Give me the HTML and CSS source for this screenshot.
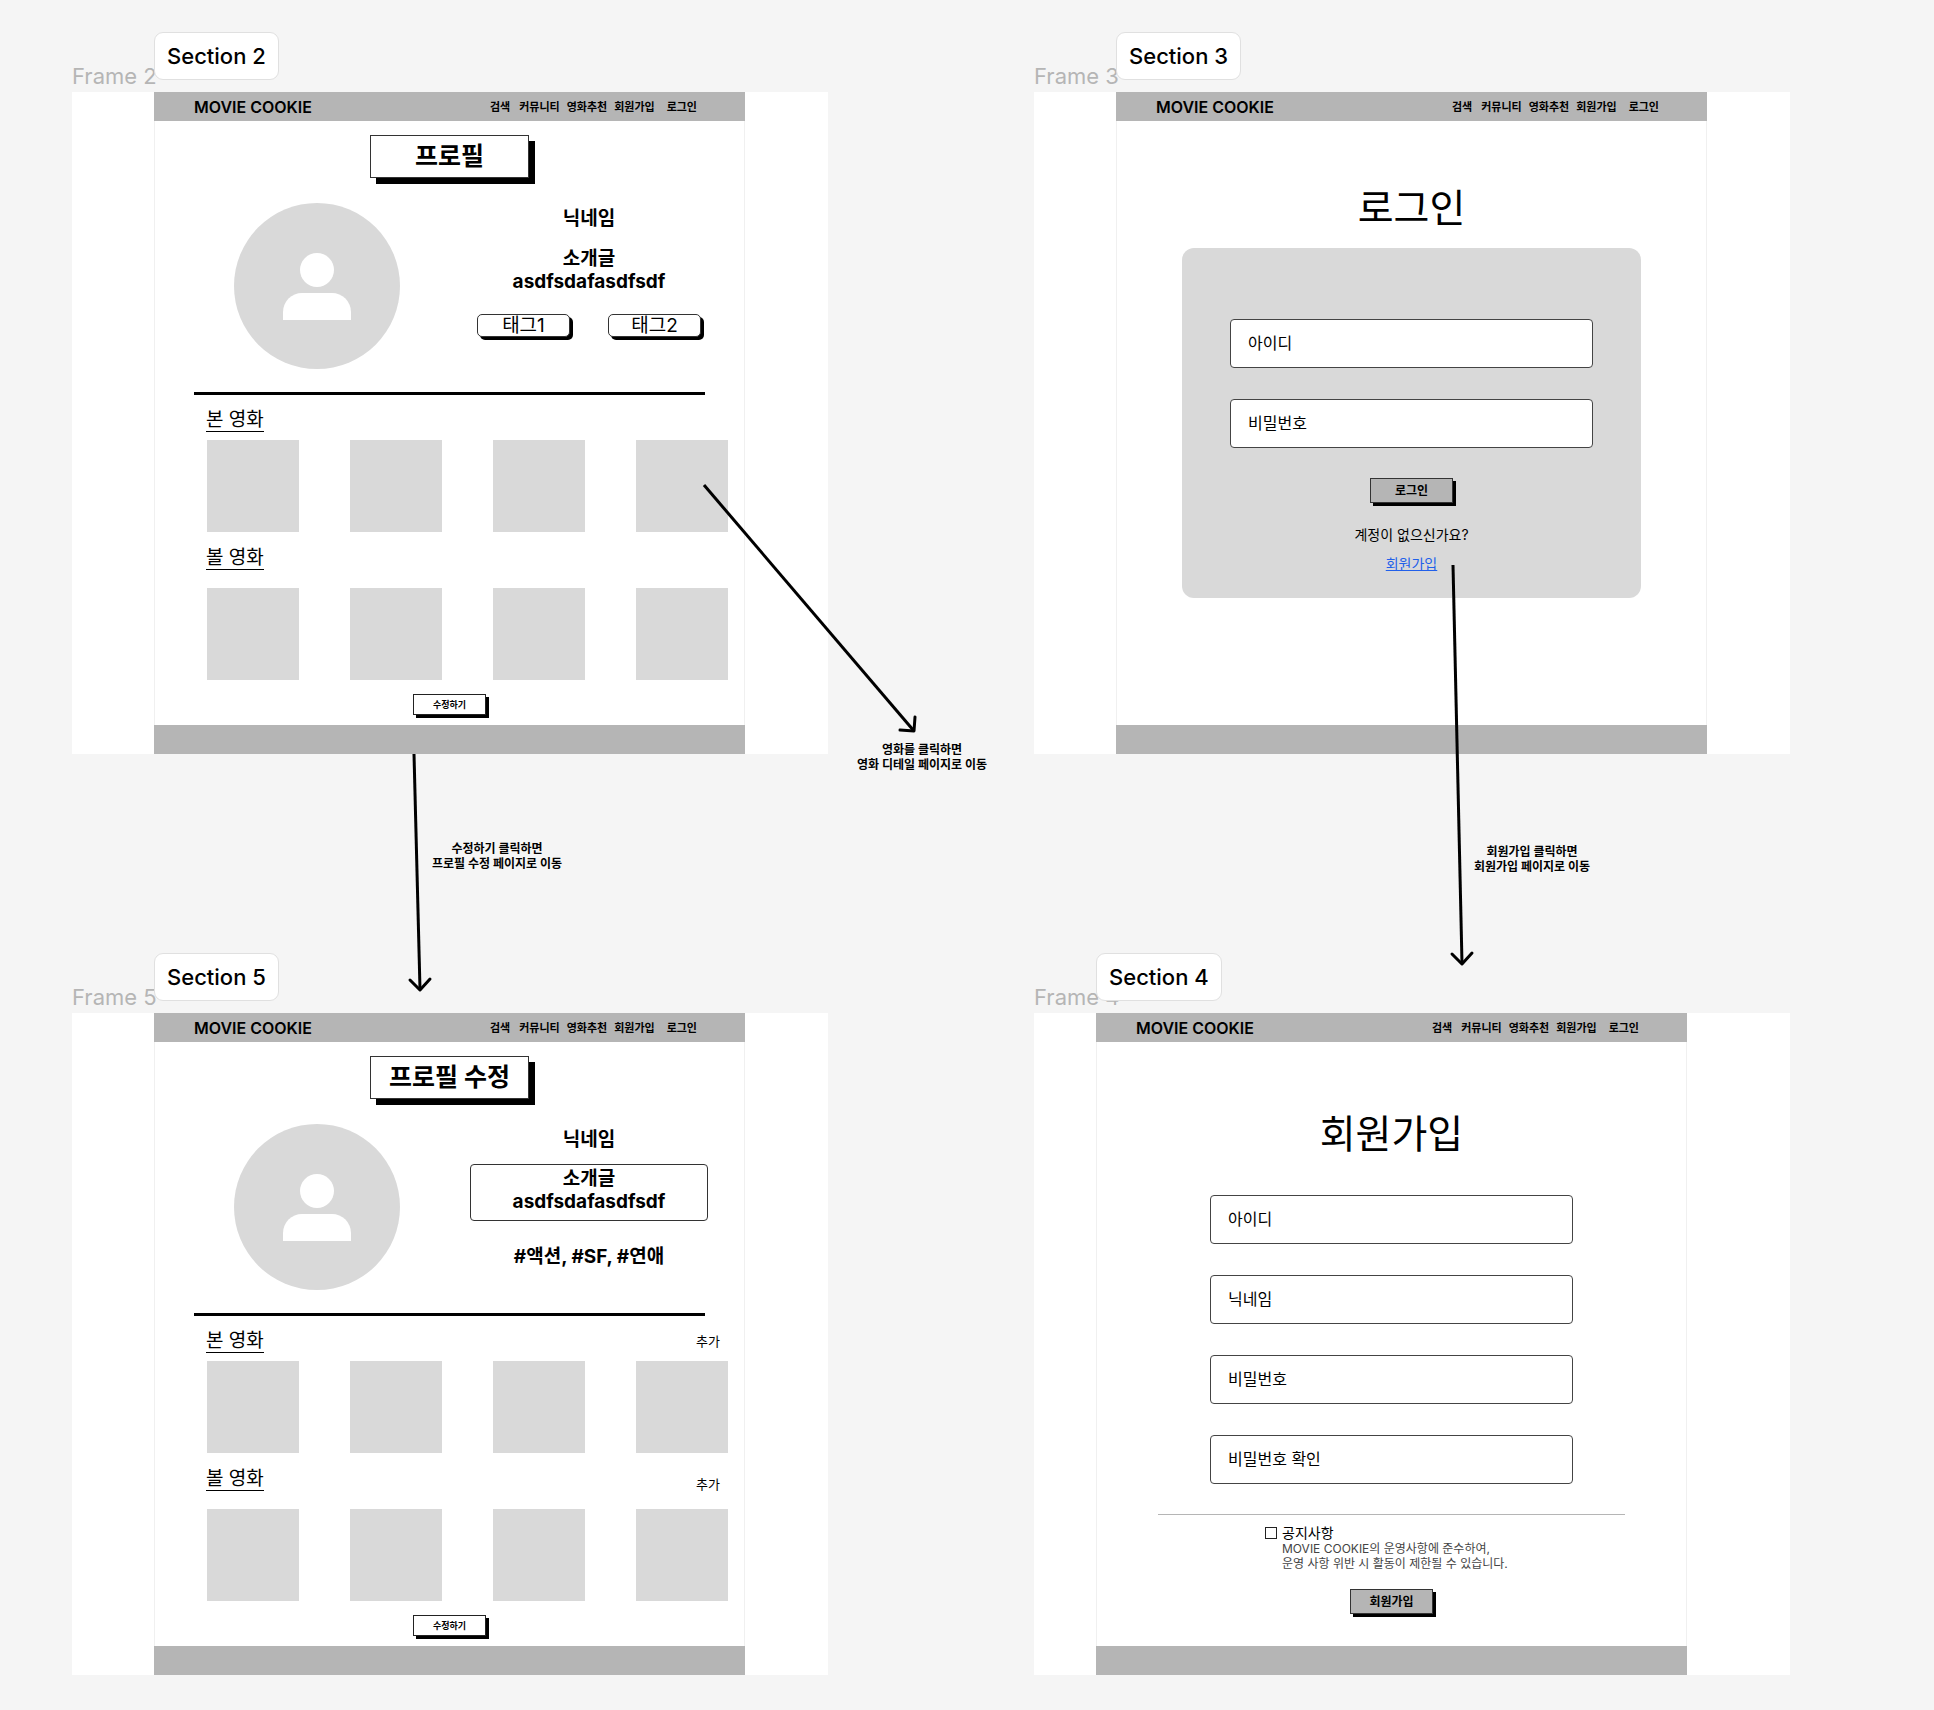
FILE: index.html
```html
<!DOCTYPE html>
<html lang="ko">
<head>
<meta charset="utf-8">
<meta name="viewport" content="width=device-width, initial-scale=1">
<title>MOVIE COOKIE</title>
<link rel="stylesheet" href="styles.css">
</head>
<body>
<div class="canvas">

  <article class="frame">
    <h2 class="frame-name">Frame 2</h2>
    <div class="artboard">
      <span class="section-tag">Section 2</span>
      <section class="screen">
        <header class="topbar">
          <a class="brand" href="#">MOVIE COOKIE</a>
          <nav class="menu"><a href="#">검색</a><a href="#">커뮤니티</a><a href="#">영화추천</a><a href="#">회원가입</a><a href="#">로그인</a></nav>
        </header>
        <div class="content profile">
          <h1 class="plate">프로필</h1>
          <div class="hero">
            <svg class="avatar" viewBox="0 0 166 166" aria-hidden="true"><circle cx="83" cy="83" r="83" fill="#d9d9d9"/><circle cx="83" cy="67" r="17" fill="#fff"/><path d="M49 117v-8a19 19 0 0 1 19-19h30a19 19 0 0 1 19 19v8z" fill="#fff"/></svg>
            <div class="info">
              <p class="strong">닉네임</p>
              <p class="strong bio">소개글<br>asdfsdafasdfsdf</p>
              <div class="tags"><button class="tag" type="button">태그1</button><button class="tag" type="button">태그2</button></div>
            </div>
          </div>
          <hr class="rule">
          <div class="lists">
            <div class="list-head"><h2 class="list-title">본 영화</h2></div>
            <div class="tiles"><div class="tile"></div><div class="tile"></div><div class="tile"></div><div class="tile"></div></div>
            <div class="list-head tall"><h2 class="list-title">볼 영화</h2></div>
            <div class="tiles"><div class="tile"></div><div class="tile"></div><div class="tile"></div><div class="tile"></div></div>
          </div>
          <button class="edit" type="button">수정하기</button>
        </div>
        <footer class="bottombar"></footer>
      </section>
    </div>
  </article>

  <article class="frame">
    <h2 class="frame-name">Frame 3</h2>
    <div class="artboard">
      <span class="section-tag">Section 3</span>
      <section class="screen">
        <header class="topbar">
          <a class="brand" href="#">MOVIE COOKIE</a>
          <nav class="menu"><a href="#">검색</a><a href="#">커뮤니티</a><a href="#">영화추천</a><a href="#">회원가입</a><a href="#">로그인</a></nav>
        </header>
        <div class="content">
          <h1 class="headline login-title">로그인</h1>
          <form class="panel">
            <div class="fields">
              <input class="field" type="text" placeholder="아이디" aria-label="아이디">
              <input class="field" type="password" placeholder="비밀번호" aria-label="비밀번호">
            </div>
            <button class="submit" type="button">로그인</button>
            <p class="ask">계정이 없으신가요?</p>
            <a class="join" href="#">회원가입</a>
          </form>
        </div>
        <footer class="bottombar"></footer>
      </section>
    </div>
  </article>

  <article class="frame">
    <h2 class="frame-name">Frame 5</h2>
    <div class="artboard">
      <span class="section-tag">Section 5</span>
      <section class="screen">
        <header class="topbar">
          <a class="brand" href="#">MOVIE COOKIE</a>
          <nav class="menu"><a href="#">검색</a><a href="#">커뮤니티</a><a href="#">영화추천</a><a href="#">회원가입</a><a href="#">로그인</a></nav>
        </header>
        <div class="content profile">
          <h1 class="plate">프로필 수정</h1>
          <div class="hero">
            <svg class="avatar" viewBox="0 0 166 166" aria-hidden="true"><circle cx="83" cy="83" r="83" fill="#d9d9d9"/><circle cx="83" cy="67" r="17" fill="#fff"/><path d="M49 117v-8a19 19 0 0 1 19-19h30a19 19 0 0 1 19 19v8z" fill="#fff"/></svg>
            <div class="info">
              <p class="strong">닉네임</p>
              <textarea class="strong bio-edit" rows="2" aria-label="소개글">소개글
asdfsdafasdfsdf</textarea>
              <p class="strong genres">#액션, #SF, #연애</p>
            </div>
          </div>
          <hr class="rule">
          <div class="lists">
            <div class="list-head"><h2 class="list-title">본 영화</h2><button class="add" type="button">추가</button></div>
            <div class="tiles"><div class="tile"></div><div class="tile"></div><div class="tile"></div><div class="tile"></div></div>
            <div class="list-head tall"><h2 class="list-title">볼 영화</h2><button class="add" type="button">추가</button></div>
            <div class="tiles"><div class="tile"></div><div class="tile"></div><div class="tile"></div><div class="tile"></div></div>
          </div>
          <button class="edit" type="button">수정하기</button>
        </div>
        <footer class="bottombar"></footer>
      </section>
    </div>
  </article>

  <article class="frame frame-shifted">
    <h2 class="frame-name">Frame 4</h2>
    <div class="artboard">
      <span class="section-tag">Section 4</span>
      <section class="screen">
        <header class="topbar">
          <a class="brand" href="#">MOVIE COOKIE</a>
          <nav class="menu"><a href="#">검색</a><a href="#">커뮤니티</a><a href="#">영화추천</a><a href="#">회원가입</a><a href="#">로그인</a></nav>
        </header>
        <div class="content">
          <h1 class="headline signup-title">회원가입</h1>
          <form class="signup">
            <div class="fields">
              <input class="field" type="text" placeholder="아이디" aria-label="아이디">
              <input class="field" type="text" placeholder="닉네임" aria-label="닉네임">
              <input class="field" type="password" placeholder="비밀번호" aria-label="비밀번호">
              <input class="field" type="password" placeholder="비밀번호 확인" aria-label="비밀번호 확인">
            </div>
            <hr class="divider">
            <div class="notice">
              <input class="check" type="checkbox" id="agree">
              <label class="notice-title" for="agree">공지사항</label>
              <p class="notice-text">MOVIE COOKIE의 운영사항에 준수하여,<br>운영 사항 위반 시 활동이 제한될 수 있습니다.</p>
            </div>
            <button class="submit" type="button">회원가입</button>
          </form>
        </div>
        <footer class="bottombar"></footer>
      </section>
    </div>
  </article>

  <svg class="arrows" aria-hidden="true">
    <path d="M704 485L914 731"/>
    <path class="tip" d="M900 730L914 731L915 717"/>
    <path d="M414 754L420 989"/>
    <path class="tip" d="M410 980L420 990L430 979"/>
    <path d="M1453 565L1462 963"/>
    <path class="tip" d="M1452 954L1462 964L1472 953"/>
  </svg>
  <p class="note note-movie">영화를 클릭하면<br>영화 디테일 페이지로 이동</p>
  <p class="note note-edit">수정하기 클릭하면<br>프로필 수정 페이지로 이동</p>
  <p class="note note-join">회원가입 클릭하면<br>회원가입 페이지로 이동</p>
</div>
</body>
</html>
```
FILE: styles.css
```css
* {
  box-sizing: border-box;
}

body {
  margin: 0;
  background: #f5f5f5;
  color: #000;
  font-family: Inter, "Noto Sans CJK KR", sans-serif;
}

h1,
h2,
p {
  margin: 0;
  font-weight: 400;
}

hr {
  border: 0;
  margin: 0;
}

button,
input,
textarea {
  margin: 0;
  padding: 0;
  font-family: inherit;
  color: inherit;
}

a {
  color: inherit;
  text-decoration: none;
}

/* Canvas and artboards */
.canvas {
  position: relative;
  display: grid;
  grid-template-columns: repeat(2, 756px);
  gap: 229px 206px;
  padding: 62px 72px 35px;
}

.frame-name {
  height: 30px;
  font-size: 22px;
  line-height: 28px;
  color: #b5b5b5;
}

.artboard {
  position: relative;
  padding: 0 83px 0 82px;
  background: #fff;
}

.frame-shifted .artboard {
  padding: 0 103px 0 62px;
}

.section-tag {
  position: absolute;
  bottom: calc(100% + 12px);
  left: 82px;
  padding: 0 12px;
  border: 1px solid #e0e0e0;
  border-radius: 9px;
  background: #fff;
  font-size: 22px;
  font-weight: 500;
  line-height: 46px;
}

.frame-shifted .section-tag {
  left: 62px;
}

.screen {
  display: flex;
  flex-direction: column;
  min-height: 662px;
}

.topbar {
  display: flex;
  align-items: center;
  justify-content: space-between;
  height: 29px;
  padding: 0 48px 0 40px;
  background: #b5b5b5;
}

.brand {
  font-size: 16px;
  font-weight: 600;
}

.menu {
  display: flex;
  gap: 7px;
  padding-bottom: 2px;
  font-size: 11px;
  font-weight: 700;
}

.menu a:first-child {
  margin-right: 2px;
}

.menu a:last-child {
  margin-left: 5px;
}

.content {
  flex: 1;
  border: solid #f0f0f0;
  border-width: 0 1px;
}

.bottombar {
  height: 29px;
  background: #b5b5b5;
}

/* Profile screens */
.profile {
  display: flex;
  flex-direction: column;
}

.plate {
  align-self: center;
  width: 159px;
  margin: 14px 0 25px;
  border: 1px solid #333;
  background: #fff;
  box-shadow: 6px 6px 0 #000;
  font-size: 25px;
  font-weight: 700;
  line-height: 41px;
  text-align: center;
}

.hero {
  display: flex;
  align-items: flex-start;
  gap: 70px;
  padding-left: 79px;
}

.avatar {
  width: 166px;
  height: 166px;
}

.info {
  display: flex;
  flex-direction: column;
  align-items: center;
  width: 238px;
  padding-top: 4px;
}

.strong {
  font-size: 19px;
  font-weight: 700;
  line-height: 23px;
  text-align: center;
}

.bio {
  margin: 17px 0 21px;
}

.bio-edit {
  width: 100%;
  height: 57px;
  margin: 13px 0 24px;
  padding: 2px;
  border: 1px solid #333;
  border-radius: 4px;
  background: #fff;
  resize: none;
}

.tags {
  display: flex;
  gap: 38px;
}

.tag {
  width: 93px;
  height: 23px;
  border: 1px solid #333;
  border-radius: 5px;
  background: #fff;
  box-shadow: 3px 3px 0 #000;
  font-size: 19px;
  line-height: 21px;
}

.rule {
  height: 3px;
  margin: 23px 39px 14px;
  background: #000;
}

.lists {
  padding: 0 16px 0 51px;
}

.list-head {
  display: flex;
  align-items: center;
  justify-content: space-between;
  min-height: 24px;
}

.list-head.tall {
  min-height: 34px;
  margin-top: 15px;
}

.list-title {
  align-self: flex-start;
  border-bottom: 1px solid #000;
  font-size: 19px;
  line-height: 22px;
}

.add {
  padding: 0 8px 2px;
  border: 0;
  background: none;
  font-size: 13px;
  line-height: 15px;
}

.tiles {
  display: grid;
  grid-template-columns: repeat(4, 1fr);
  gap: 51px;
  margin: 7px 0 0 1px;
}

.tile {
  aspect-ratio: 1;
  background: #d9d9d9;
}

.edit {
  align-self: center;
  width: 73px;
  height: 21px;
  margin: 14px 0 10px;
  border: 1px solid #222;
  background: #fff;
  box-shadow: 3px 3px 0 #000;
  font-size: 9px;
  font-weight: 700;
  line-height: 19px;
}

/* Login and sign-up screens */
.headline {
  font-size: 39px;
  line-height: 48px;
  text-align: center;
}

.login-title {
  margin: 63px 0 16px;
}

.signup-title {
  margin: 68px 0 37px;
}

.panel {
  display: flex;
  flex-direction: column;
  align-items: center;
  margin: 0 65px;
  padding: 71px 48px 26px;
  border-radius: 12px;
  background: #d9d9d9;
}

.fields {
  display: flex;
  flex-direction: column;
  gap: 31px;
  width: 100%;
}

.field {
  width: 100%;
  height: 49px;
  padding: 0 17px 2px;
  border: 1px solid #444;
  border-radius: 4px;
  background: #fff;
  font-size: 16px;
}

.field::placeholder {
  color: #000;
  opacity: 1;
}

.submit {
  width: 83px;
  height: 25px;
  border: 1px solid #333;
  background: #b5b5b5;
  box-shadow: 3px 3px 0 #000;
  font-size: 12px;
  font-weight: 700;
  line-height: 23px;
}

.panel .submit {
  margin: 30px 0 23px;
}

.ask,
.join {
  font-size: 14px;
  line-height: 17px;
}

.join {
  margin-top: 12px;
  color: #2160ea;
  text-decoration: underline;
}

.signup {
  display: flex;
  flex-direction: column;
  align-items: center;
  padding: 0 61px;
}

.signup .fields {
  padding: 0 52px;
}

.divider {
  width: 100%;
  height: 1px;
  margin: 30px 0 9px;
  background: #b5b5b5;
}

.notice {
  display: grid;
  grid-template-columns: 12px auto;
  column-gap: 5px;
  align-items: center;
  align-self: flex-start;
  margin: 0 0 18px 107px;
}

.check {
  appearance: none;
  width: 12px;
  height: 12px;
  border: 1px solid #222;
  background: #fff;
}

.notice-title {
  font-size: 14px;
  line-height: 17px;
}

.notice-text {
  grid-column: 2;
  color: #444;
  font-size: 12px;
  line-height: 15px;
}

/* Flow arrows and their captions, pinned on the canvas */
.arrows {
  position: absolute;
  inset: 0;
  width: 100%;
  height: 100%;
  fill: none;
  stroke: #000;
  stroke-width: 3;
  pointer-events: none;
}

.tip {
  stroke-linecap: round;
  stroke-linejoin: round;
}

.note {
  position: absolute;
  font-size: 12px;
  font-weight: 700;
  line-height: 15px;
  text-align: center;
  white-space: nowrap;
  transform: translateX(-50%);
}

.note-movie {
  top: 742px;
  left: 922px;
}

.note-edit {
  top: 841px;
  left: 497px;
}

.note-join {
  top: 844px;
  left: 1532px;
}
```
